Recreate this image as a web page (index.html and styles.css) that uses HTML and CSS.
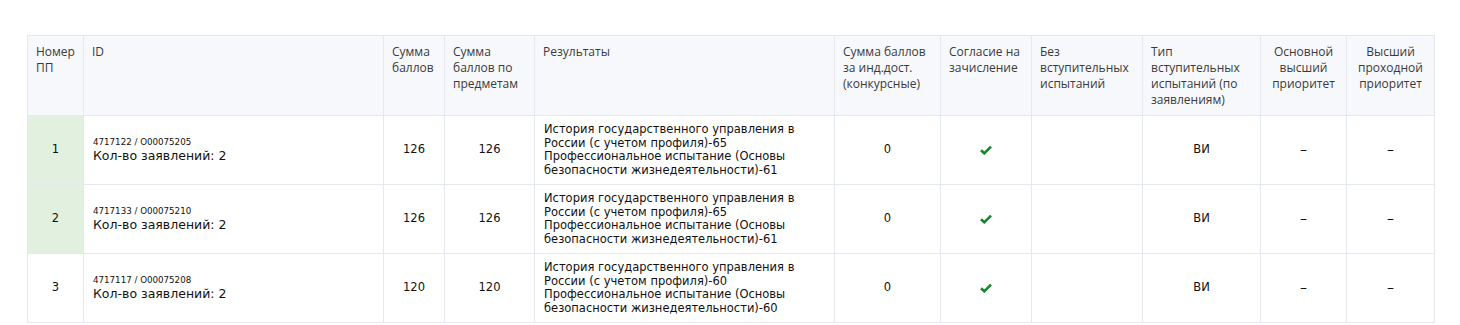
FILE: index.html
```html
<!DOCTYPE html>
<html lang="ru">
<head>
<meta charset="utf-8">
<link rel="stylesheet" href="styles.css">
</head>
<body>
<div class="wrap">
<table class="rating">
  <colgroup>
    <col class="c-num"><col class="c-id"><col class="c-sum"><col class="c-subj"><col class="c-res"><col class="c-ind"><col class="c-agree"><col class="c-noexam"><col class="c-type"><col class="c-main"><col class="c-high">
  </colgroup>
  <thead>
    <tr>
      <th>Номер ПП</th>
      <th>ID</th>
      <th>Сумма баллов</th>
      <th>Сумма баллов по предметам</th>
      <th>Результаты</th>
      <th>Сумма баллов за инд.дост. (конкурсные)</th>
      <th>Согласие на зачисление</th>
      <th>Без вступительных испытаний</th>
      <th>Тип вступительных испытаний (по заявлениям)</th>
      <th class="center">Основной высший приоритет</th>
      <th class="center">Высший проходной приоритет</th>
    </tr>
  </thead>
  <tbody>
    <tr>
      <td class="num pass">1</td>
      <td class="id"><div class="code">4717122 / O00075205</div><div class="count">Кол-во заявлений: 2</div></td>
      <td class="center">126</td>
      <td class="center">126</td>
      <td class="res">История государственного управления в России (с учетом профиля)-65<br>Профессиональное испытание (Основы безопасности жизнедеятельности)-61</td>
      <td class="center">0</td>
      <td class="center"><svg class="check" width="12" height="10" viewBox="0 0 12 10"><path d="M1 5.2 L4.3 8.3 L11 1.6" fill="none" stroke="#15862a" stroke-width="2.6"/></svg></td>
      <td></td>
      <td class="center">ВИ</td>
      <td class="center dash">–</td>
      <td class="center dash">–</td>
    </tr>
    <tr>
      <td class="num pass">2</td>
      <td class="id"><div class="code">4717133 / O00075210</div><div class="count">Кол-во заявлений: 2</div></td>
      <td class="center">126</td>
      <td class="center">126</td>
      <td class="res">История государственного управления в России (с учетом профиля)-65<br>Профессиональное испытание (Основы безопасности жизнедеятельности)-61</td>
      <td class="center">0</td>
      <td class="center"><svg class="check" width="12" height="10" viewBox="0 0 12 10"><path d="M1 5.2 L4.3 8.3 L11 1.6" fill="none" stroke="#15862a" stroke-width="2.6"/></svg></td>
      <td></td>
      <td class="center">ВИ</td>
      <td class="center dash">–</td>
      <td class="center dash">–</td>
    </tr>
    <tr>
      <td class="num">3</td>
      <td class="id"><div class="code">4717117 / O00075208</div><div class="count">Кол-во заявлений: 2</div></td>
      <td class="center">120</td>
      <td class="center">120</td>
      <td class="res">История государственного управления в России (с учетом профиля)-60<br>Профессиональное испытание (Основы безопасности жизнедеятельности)-60</td>
      <td class="center">0</td>
      <td class="center"><svg class="check" width="12" height="10" viewBox="0 0 12 10"><path d="M1 5.2 L4.3 8.3 L11 1.6" fill="none" stroke="#15862a" stroke-width="2.6"/></svg></td>
      <td></td>
      <td class="center">ВИ</td>
      <td class="center dash">–</td>
      <td class="center dash">–</td>
    </tr>
  </tbody>
</table>
</div>
</body>
</html>
```

FILE: styles.css
```css
html, body {
  margin: 0;
  padding: 0;
  background: #ffffff;
}
.wrap {
  padding: 35px 0 0 27px;
}
.rating {
  border-collapse: collapse;
  table-layout: fixed;
  width: 1407px;
  font-family: "DejaVu Sans", sans-serif;
  color: #111111;
}
.c-num { width: 56px; }
.c-id { width: 300px; }
.c-sum { width: 61px; }
.c-subj { width: 90px; }
.c-res { width: 300px; }
.c-ind { width: 106px; }
.c-agree { width: 91px; }
.c-noexam { width: 111px; }
.c-type { width: 118px; }
.c-main { width: 86px; }
.c-high { width: 88px; }

.rating th, .rating td {
  border: 1px solid #e6e8ef;
}
.rating th {
  background: #f7f8fc;
  height: 80px;
  box-sizing: border-box;
  padding: 8px 8px 0 8px;
  vertical-align: top;
  text-align: left;
  font-family: "Open Sans", "Noto Sans", sans-serif;
  font-weight: normal;
  font-size: 12px;
  line-height: 16px;
  color: #3a3a3a;
}
.rating th.center { text-align: center; }
.rating td {
  height: 68px;
  padding: 0 8px;
  vertical-align: middle;
  font-size: 11.5px;
  line-height: 13.5px;
}
.rating td.center { text-align: center; }
.rating td.num { text-align: center; }
.rating td.pass { background: #e2f1df; }
.rating td.id { padding-left: 9px; }
.rating td.dash { font-size: 14px; }
.code {
  font-size: 8.7px;
  line-height: 11px;
}
.count {
  font-size: 12.5px;
  line-height: 16px;
}
.rating td.res { padding-left: 9px; }
.check { display: inline-block; vertical-align: middle; }
```
